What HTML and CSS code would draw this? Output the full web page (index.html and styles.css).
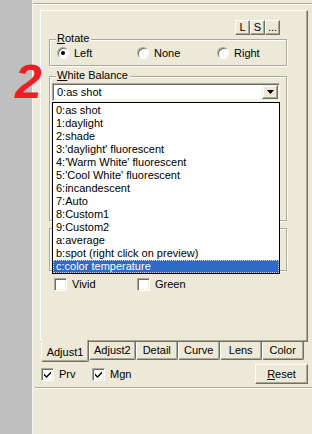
FILE: index.html
```html
<!DOCTYPE html>
<html>
<head>
<meta charset="utf-8">
<link rel="stylesheet" href="styles.css">
</head>
<body>
<div class="strip"></div>
<div class="main">
  <div class="topline"></div>
  <div class="page">
    <div class="toolrow">
      <span class="btn sm">L</span><span class="btn sm">S</span><span class="btn sm">...</span>
    </div>
    <div class="group rotate">
      <span class="legend"><u>R</u>otate</span>
      <div class="radios">
        <span class="opt"><span class="rb on"></span>Left</span>
        <span class="opt"><span class="rb"></span>None</span>
        <span class="opt"><span class="rb"></span>Right</span>
      </div>
    </div>
    <div class="group wb">
      <span class="legend"><u>W</u>hite Balance</span>
      <div class="combo">
        <span class="val">0:as shot</span>
        <span class="drop"><svg width="7" height="4" viewBox="0 0 7 4"><path d="M0 0H7L3.5 4Z" fill="#000"/></svg></span>
      </div>
    </div>
    <div class="group g3"></div>
    <div class="checks">
      <span class="opt2"><span class="cb"></span>Vivid</span>
      <span class="opt2"><span class="cb"></span>Green</span>
    </div>
    <ul class="list">
      <li>0:as shot</li>
      <li>1:daylight</li>
      <li>2:shade</li>
      <li>3:'daylight' fluorescent</li>
      <li>4:'Warm White' fluorescent</li>
      <li>5:'Cool White' fluorescent</li>
      <li>6:incandescent</li>
      <li>7:Auto</li>
      <li>8:Custom1</li>
      <li>9:Custom2</li>
      <li>a:average</li>
      <li>b:spot (right click on preview)</li>
      <li class="sel">c:color temperature</li>
    </ul>
  </div>
  <div class="tabs">
    <span class="tab active">Adjust1</span>
    <span class="tab">Adjust2</span>
    <span class="tab">Detail</span>
    <span class="tab">Curve</span>
    <span class="tab">Lens</span>
    <span class="tab">Color</span>
  </div>
  <div class="bottom">
    <span class="opt3"><span class="cb checked"><svg width="7" height="7" viewBox="0 0 7 7"><path d="M0 2.5L2.5 5L7 0.5V2.5L2.5 7L0 4.5Z" fill="#000"/></svg></span>Prv</span>
    <span class="opt3"><span class="cb checked"><svg width="7" height="7" viewBox="0 0 7 7"><path d="M0 2.5L2.5 5L7 0.5V2.5L2.5 7L0 4.5Z" fill="#000"/></svg></span>Mgn</span>
    <span class="btn reset"><u>R</u>eset</span>
  </div>
  <div class="sep"></div>
</div>
<div class="two">2</div>
</body>
</html>
```
FILE: styles.css
```css
* { box-sizing: border-box; }
html, body { margin: 0; padding: 0; }
body {
  width: 312px;
  height: 434px;
  overflow: hidden;
  display: flex;
  background: #ece9d8;
  font-family: "Liberation Sans", Arial, sans-serif;
  font-size: 11px;
  line-height: 13px;
  color: #000;
  position: relative;
}
.strip {
  width: 33px;
  flex: none;
  background: #bfbfbf;
  border-right: 1px solid #f4f3ee;
}
.main {
  flex: 1;
  display: flex;
  flex-direction: column;
}
.topline {
  margin-top: 3px;
  border-top: 1px solid #aca899;
  border-bottom: 1px solid #fff;
}
.page {
  position: relative;
  margin: 5px 4px 0 7px;
  height: 332px;
  border-left: 1px solid #fff;
  border-top: 1px solid #fff;
  border-right: 1px solid #716f64;
  border-bottom: 1px solid #716f64;
  box-shadow: inset -1px -1px 0 #aca899;
  padding-top: 9px;
}
.toolrow {
  display: flex;
  justify-content: flex-end;
  padding-right: 27px;
}
.btn {
  display: flex;
  align-items: center;
  justify-content: center;
  background: #ece9d8;
  border: 1px solid;
  border-color: #fff #716f64 #716f64 #fff;
  box-shadow: inset -1px -1px 0 #aca899;
}
.btn.sm {
  width: 15px;
  height: 15px;
  padding-bottom: 1px;
}
.group {
  margin-left: 8px;
  width: 238px;
  border: 1px solid #aca899;
  box-shadow: inset 1px 1px 0 #fff, 1px 1px 0 #fff;
  display: flex;
  flex-direction: column;
  align-items: flex-start;
}
.legend {
  display: block;
  margin-top: -8px;
  margin-left: 6px;
  padding: 0 2px 0 1px;
  background: #ece9d8;
  line-height: 13px;
}
.rotate {
  margin-top: 4px;
  height: 27px;
}
.radios {
  margin-top: 1px;
  padding-left: 7px;
  display: grid;
  grid-template-columns: 80px 80px auto;
  height: 14px;
  align-items: center;
}
.opt {
  display: flex;
  align-items: center;
  gap: 5px;
}
.rb {
  width: 12px;
  height: 12px;
  border-radius: 50%;
  background: #fff;
  border: 1px solid;
  border-color: #aca899 #fff #fff #aca899;
  box-shadow: inset 1px 1px 0 #716f64;
  display: flex;
  align-items: center;
  justify-content: center;
}
.rb.on::after {
  content: "";
  width: 4px;
  height: 4px;
  border-radius: 50%;
  background: #000;
}
.wb {
  margin-top: 10px;
  height: 145px;
}
.combo {
  margin-top: 1px;
  margin-left: 2px;
  width: 228px;
  height: 18px;
  background: #fff;
  border: 1px solid;
  border-color: #aca899 #fff #fff #aca899;
  box-shadow: inset 1px 1px 0 #716f64, inset -1px -1px 0 #f1efe2;
  display: flex;
  align-items: center;
  padding: 0 1px 0 4px;
}
.val { flex: 1; }
.drop {
  width: 16px;
  height: 14px;
  background: #ece9d8;
  border: 1px solid;
  border-color: #f1efe2 #716f64 #716f64 #f1efe2;
  box-shadow: inset -1px -1px 0 #aca899, inset 1px 1px 0 #fff;
  display: flex;
  align-items: center;
  justify-content: center;
}
.g3 {
  margin-top: 7px;
  height: 43px;
}
.checks {
  margin-top: 7px;
  padding-left: 13px;
  display: grid;
  grid-template-columns: 83px auto;
  height: 13px;
  align-items: center;
}
.opt2, .opt3 {
  display: flex;
  align-items: center;
  gap: 5px;
}
.cb {
  width: 13px;
  height: 13px;
  flex: none;
  background: #fff;
  border: 1px solid;
  border-color: #aca899 #fff #fff #aca899;
  box-shadow: inset 1px 1px 0 #716f64, inset -1px -1px 0 #f1efe2;
  display: flex;
  align-items: center;
  justify-content: center;
}
.list {
  position: absolute;
  left: 11px;
  top: 91px;
  width: 228px;
  margin: 0;
  padding: 1px 0 0;
  list-style: none;
  background: #fff;
  border: 1px solid #000;
}
.list li {
  height: 13px;
  line-height: 13px;
  padding-left: 3px;
  white-space: nowrap;
}
.list li.sel {
  background: #316ac5;
  color: #fff;
  outline: 1px dotted #c9d6ef;
  outline-offset: -1px;
}
.tabs {
  display: flex;
  align-items: flex-start;
  margin: -2px 0 0 7px;
  padding-left: 1px;
}
.tab {
  margin-top: 2px;
  height: 18px;
  min-width: 42px;
  padding: 0 4px 1px;
  display: flex;
  align-items: center;
  justify-content: center;
  background: #ece9d8;
  border-left: 1px solid #fff;
  border-right: 1px solid #716f64;
  border-bottom: 1px solid #716f64;
  box-shadow: inset -1px -1px 0 #aca899;
  border-bottom-left-radius: 2px;
  border-bottom-right-radius: 2px;
}
.tab.active {
  position: relative;
  z-index: 1;
  margin-top: 0;
  height: 22px;
  width: 48px;
  padding-top: 4px;
}
.bottom {
  margin-top: 2px;
  height: 20px;
  display: flex;
  align-items: center;
  padding-left: 8px;
}
.opt3 { width: 51px; }
.btn.reset {
  margin-left: auto;
  margin-right: 4px;
  width: 53px;
  height: 20px;
}
.sep {
  margin: 3px 0 0 2px;
  border-top: 1px solid #aca899;
  border-bottom: 1px solid #fff;
}
.two {
  position: absolute;
  left: 15px;
  top: 58px;
  font-size: 48px;
  line-height: 48px;
  font-weight: bold;
  font-style: italic;
  color: #ee1c24;
}
```
